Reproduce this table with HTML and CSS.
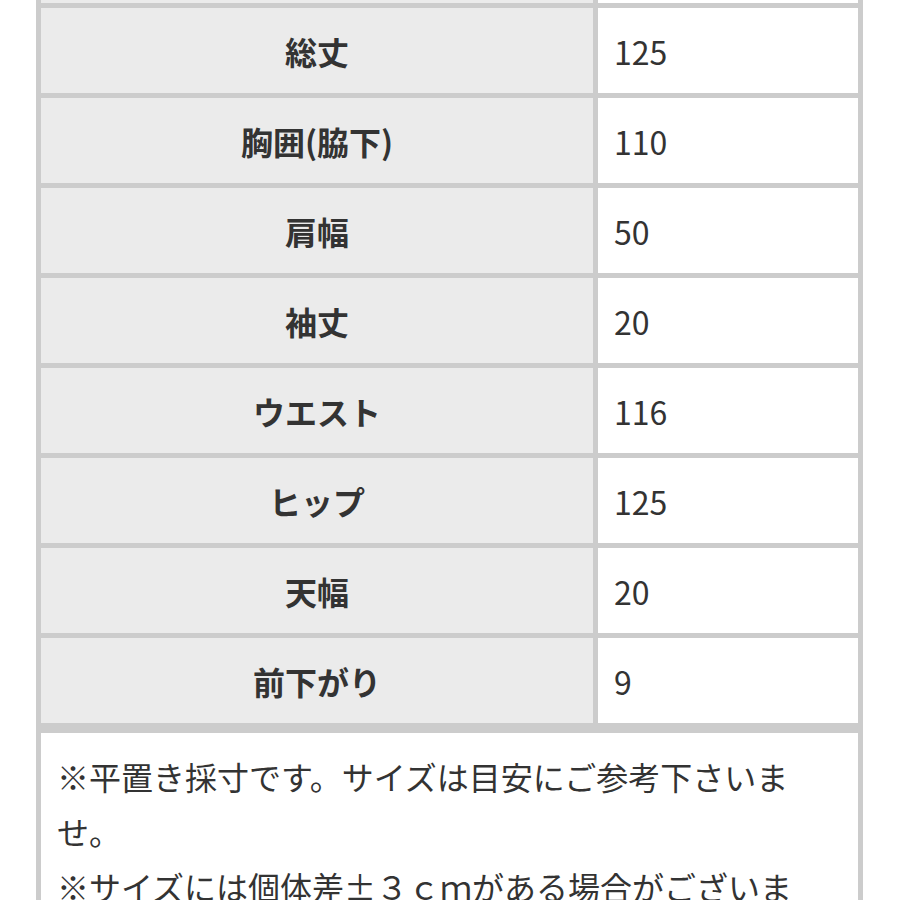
FILE: index.html
```html
<!DOCTYPE html>
<html lang="ja">
<head>
<meta charset="utf-8">
<link rel="stylesheet" href="styles.css">
</head>
<body>
<div class="page">
  <div class="table">
    <div class="cell label"></div><div class="cell value"></div>
    <div class="cell label">総丈</div><div class="cell value">125</div>
    <div class="cell label">胸囲(脇下)</div><div class="cell value">110</div>
    <div class="cell label">肩幅</div><div class="cell value">50</div>
    <div class="cell label">袖丈</div><div class="cell value">20</div>
    <div class="cell label">ウエスト</div><div class="cell value">116</div>
    <div class="cell label">ヒップ</div><div class="cell value">125</div>
    <div class="cell label">天幅</div><div class="cell value">20</div>
    <div class="cell label">前下がり</div><div class="cell value">9</div>
  </div>
  <div class="notes">
    <p>※平置き採寸です。サイズは目安にご参考下さいませ。</p>
    <p>※サイズには個体差±３ｃｍがある場合がございます。</p>
  </div>
</div>
</body>
</html>
```
FILE: styles.css
```css
html, body {
  margin: 0;
  padding: 0;
  background: #ffffff;
}
body {
  font-family: "Noto Sans CJK JP", "Noto Sans", sans-serif;
  color: #333333;
  overflow: hidden;
  height: 900px;
}
.page {
  margin-left: 36px;
  margin-top: -87px;
  width: 827px;
}
.table {
  display: grid;
  grid-template-columns: 552px 260px;
  grid-auto-rows: 85px;
  gap: 5px;
  padding: 5px;
  background: #cccccc;
}
.cell {
  display: flex;
  align-items: center;
  font-size: 32px;
  line-height: 1;
}
.label {
  background: #ebebeb;
  justify-content: center;
  font-weight: 700;
}
.value {
  background: #ffffff;
  padding-left: 16px;
}
.notes {
  box-sizing: border-box;
  width: 827px;
  border: 5px solid #cccccc;
  border-top: 5px solid #cccccc;
  padding: 16px 44px 16px 16px;
  font-size: 32px;
  line-height: 55px;
}
.notes p {
  margin: 0;
}
```
